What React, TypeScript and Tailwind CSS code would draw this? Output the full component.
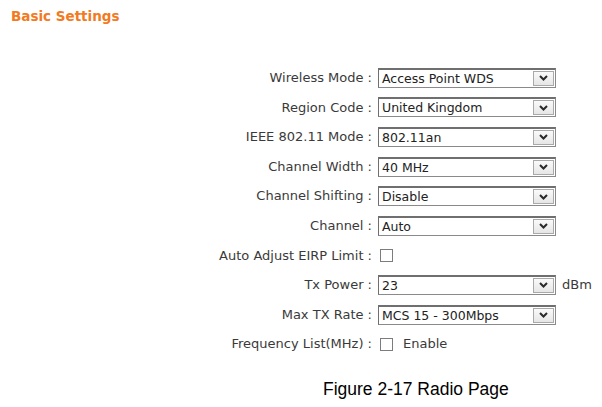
import { ReactNode } from "react";

type Row = {
  label: string;
  kind: "select" | "check";
  value?: string;
  suffix?: string;
};

const rows: Row[] = [
  { label: "Wireless Mode :", kind: "select", value: "Access Point WDS" },
  { label: "Region Code :", kind: "select", value: "United Kingdom" },
  { label: "IEEE 802.11 Mode :", kind: "select", value: "802.11an" },
  { label: "Channel Width :", kind: "select", value: "40 MHz" },
  { label: "Channel Shifting :", kind: "select", value: "Disable" },
  { label: "Channel :", kind: "select", value: "Auto" },
  { label: "Auto Adjust EIRP Limit :", kind: "check" },
  { label: "Tx Power :", kind: "select", value: "23", suffix: "dBm" },
  { label: "Max TX Rate :", kind: "select", value: "MCS 15 - 300Mbps" },
  { label: "Frequency List(MHz) :", kind: "check", suffix: "Enable" },
];

function Select({ value }: { value: string }) {
  return (
    <div className="flex h-[20px] w-[178px] items-stretch border border-[#8a8a8a] border-t-[2px] border-t-[#6f6f6f] border-l-[#6f6f6f] bg-white">
      <span className="flex-1 truncate pl-[3px] text-[12.5px] leading-[17px] text-[#222]">{value}</span>
      <span className="my-[1px] mr-[1px] flex w-[21px] items-center justify-center border border-[#a9a9a9] bg-gradient-to-b from-[#fafafa] to-[#e6e6e6]">
        <svg width="9" height="6" viewBox="0 0 9 6">
          <path d="M1 1 L4.5 4.5 L8 1" fill="none" stroke="#2a2a2a" strokeWidth="2" />
        </svg>
      </span>
    </div>
  );
}

function Check() {
  return <span className="ml-[2px] inline-block h-[13px] w-[13px] border border-[#7c7c7c] bg-white" />;
}

function Field({ row }: { row: Row }): ReactNode {
  if (row.kind === "check") {
    return (
      <div className="flex items-center gap-[10px]">
        <Check />
        {row.suffix && <span>{row.suffix}</span>}
      </div>
    );
  }
  return (
    <div className="flex items-center gap-[6px]">
      <Select value={row.value ?? ""} />
      {row.suffix && <span>{row.suffix}</span>}
    </div>
  );
}

export default function App() {
  return (
    <div className="h-[407px] w-[602px] bg-white text-[13px] text-[#3a3a3a]" style={{ fontFamily: '"DejaVu Sans", Verdana, sans-serif' }}>
      {/* section heading */}
      <h1 className="pl-[11px] pt-[7px] text-[13.5px] font-bold leading-[18px] text-[#f27a22]">Basic Settings</h1>

      {/* settings form */}
      <div className="mt-[38px]">
        {rows.map((row) => (
          <div key={row.label} className="flex h-[29.6px] items-center">
            <div className="w-[373px] pr-[1px] text-right">{row.label}</div>
            <div className="pl-[5px]">
              <Field row={row} />
            </div>
          </div>
        ))}
      </div>

      {/* caption */}
      <p
        className="mt-[19px] pl-[323px] text-[17.5px] leading-[22px] text-black"
        style={{ fontFamily: '"Liberation Sans", Arial, sans-serif' }}
      >
        Figure 2-17 Radio Page
      </p>
    </div>
  );
}
